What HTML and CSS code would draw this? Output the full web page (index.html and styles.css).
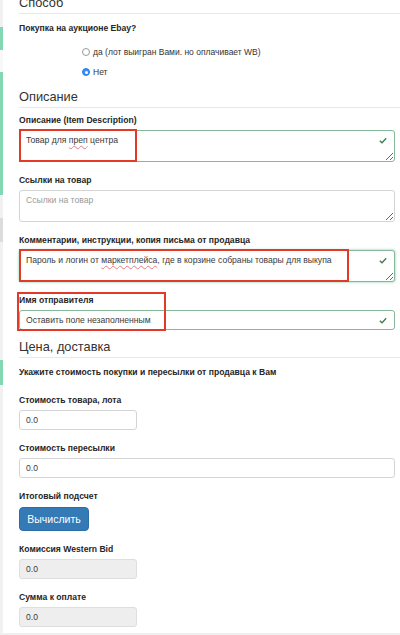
FILE: index.html
```html
<!DOCTYPE html>
<html lang="ru">
<head>
<meta charset="utf-8">
<title>Форма</title>
<link rel="stylesheet" href="styles.css">
</head>
<body>
<div class="page">
  <div class="rail">
    <div class="seg s1"></div>
    <div class="seg s2 green"></div>
    <div class="seg s3 white"></div>
    <div class="seg s4 green"></div>
    <div class="seg s5"></div>
    <div class="seg s6 gray"></div>
    <div class="seg s7"></div>
    <div class="seg s8 green"></div>
  </div>
  <main class="main">
    <h2 class="sec first">Способ</h2>
    <div class="lbl lbl-q">Покупка на аукционе Ebay?</div>
    <div class="radios">
      <div class="radio"><span class="dot"></span>да (лот выигран Вами. но оплачивает WB)</div>
      <div class="radio"><span class="dot on"></span>Нет</div>
    </div>

    <h2 class="sec sec-desc">Описание</h2>
    <div class="field field-top">
      <div class="lbl">Описание (Item Description)</div>
      <div class="ctl">
        <div class="ta ok">Товар для <span class="sp">преп</span> центра</div>
        <svg class="check" viewBox="0 0 10 8"><path d="M1 4.2 L3.8 6.8 L9 1.2" fill="none" stroke="#3c7a4e" stroke-width="1.6"/></svg>
        <div class="mark mark-1"></div>
      </div>
    </div>
    <div class="field">
      <div class="lbl">Ссылки на товар</div>
      <div class="ctl">
        <div class="ta ph">Ссылки на товар</div>
      </div>
    </div>
    <div class="field">
      <div class="lbl">Комментарии, инструкции, копия письма от продавца</div>
      <div class="ctl">
        <div class="ta ok glow">Пароль и логин от <span class="sp">маркетплейса</span>, где в корзине собраны товары для выкупа</div>
        <svg class="check" viewBox="0 0 10 8"><path d="M1 4.2 L3.8 6.8 L9 1.2" fill="none" stroke="#3c7a4e" stroke-width="1.6"/></svg>
        <div class="mark mark-3"></div>
      </div>
    </div>
    <div class="field field-name">
      <div class="lbl">Имя отправителя</div>
      <div class="ctl">
        <div class="inp ok">Оставить поле незаполненным</div>
        <svg class="check check-inp" viewBox="0 0 10 8"><path d="M1 4.2 L3.8 6.8 L9 1.2" fill="none" stroke="#3c7a4e" stroke-width="1.6"/></svg>
      </div>
      <div class="mark mark-4"></div>
    </div>

    <h2 class="sec sec-price">Цена, доставка</h2>
    <div class="lbl lbl-hint">Укажите стоимость покупки и пересылки от продавца к Вам</div>
    <div class="field field-cost">
      <div class="lbl">Стоимость товара, лота</div>
      <div class="inp short">0.0</div>
    </div>
    <div class="field">
      <div class="lbl">Стоимость пересылки</div>
      <div class="inp">0.0</div>
    </div>
    <div class="field">
      <div class="lbl lbl-btn">Итоговый подсчет</div>
      <button class="btn" type="button">Вычислить</button>
    </div>
    <div class="field">
      <div class="lbl">Комиссия Western Bid</div>
      <div class="inp short ro">0.0</div>
    </div>
    <div class="field">
      <div class="lbl">Сумма к оплате</div>
      <div class="inp short ro">0.0</div>
    </div>
  </main>
</div>
<div class="foot"></div>
</body>
</html>
```

FILE: styles.css
```css
* { box-sizing: border-box; }
html, body { margin: 0; padding: 0; background: #fff; }
body {
  font-family: "Liberation Sans", Arial, sans-serif;
  color: #2b2b2b;
  overflow: hidden;
}
.page {
  display: flex;
  height: 633px;
  overflow: hidden;
}
.rail {
  width: 3px;
  flex: 0 0 3px;
  display: flex;
  flex-direction: column;
  background: #f1f1f1;
}
.seg { flex: 0 0 auto; }
.s1 { height: 27px; }
.s2 { height: 23px; }
.s3 { height: 22px; }
.s4 { height: 123px; }
.s5 { height: 23px; }
.s6 { height: 24px; }
.s7 { height: 118px; }
.s8 { height: 25px; }
.green { background: #83d8b3; }
.white { background: #f8f8f8; }
.gray { background: #dcdcdc; }

.main {
  flex: 1;
  padding: 0 5px 0 16px;
}
.sec {
  margin: 0;
  font-weight: normal;
  font-size: 12.8px;
  line-height: 16px;
  padding-bottom: 2px;
  border-bottom: 1px solid #e8e8e8;
  color: #333;
  margin-right: -5px;
}
.sec.first { margin-top: -5px; }
.sec-desc { margin-top: 10px; }
.sec-price { margin-top: 9px; }

.lbl {
  font-weight: bold;
  font-size: 8.6px;
  line-height: 12px;
  color: #262626;
  margin-bottom: 4px;
  white-space: nowrap;
}
.lbl-q { margin-top: 8px; margin-bottom: 0; }
.lbl-hint { margin-top: 8px; margin-bottom: 0; }
.lbl-btn { margin-bottom: 5px; }

.radios {
  padding-left: 63px;
  margin-top: 11px;
  display: flex;
  flex-direction: column;
  gap: 6px;
}
.radio {
  display: flex;
  align-items: center;
  gap: 3px;
  font-size: 8.5px;
  line-height: 14px;
  color: #333;
}
.dot {
  width: 8px;
  height: 8px;
  border-radius: 50%;
  border: 1px solid #9a9a9a;
  background: #fff;
  position: relative;
}
.dot.on {
  border-color: #2f7fe8;
  background: #3a8ef5;
}
.dot.on::after {
  content: "";
  position: absolute;
  left: 1.5px;
  top: 1.5px;
  width: 3px;
  height: 3px;
  border-radius: 50%;
  background: #fff;
}

.field { margin-top: 12px; position: relative; }
.field-top { margin-top: 6px; }
.field-cost { margin-top: 16px; }
.ctl { position: relative; }

.ta {
  height: 32px;
  border: 1px solid #d4d4d4;
  border-radius: 3px;
  padding: 3px 6px;
  font-size: 8.6px;
  line-height: 12px;
  color: #3a3a3a;
  resize: vertical;
  overflow: hidden;
  background: #fff;
}
.ta.ok { border-color: #86b798; }
.ta.glow { box-shadow: 0 0 2px 1px rgba(120, 200, 160, 0.45); }
.ta.ph { color: #9a9a9a; }
.sp {
  text-decoration: underline wavy #e77c84;
  text-decoration-thickness: 1px;
  text-underline-offset: 1.5px;
}
.inp {
  height: 20px;
  border: 1px solid #d4d4d4;
  border-radius: 3px;
  padding: 0 6px;
  font-size: 8.6px;
  line-height: 18px;
  color: #3a3a3a;
  background: #fff;
}
.inp.ok { border-color: #86b798; }
.inp.short { width: 118px; }
.inp.ro { background: #eeeeee; border-color: #dedede; }

.check {
  position: absolute;
  right: 8px;
  top: 7px;
  width: 8px;
  height: 7px;
}
.check.check-inp { top: 7px; }

.mark {
  position: absolute;
  border: 2px solid #e23a27;
  pointer-events: none;
}
.mark-1 { left: 0; top: -1px; width: 118px; height: 33px; }
.mark-3 { left: 0; top: -1px; width: 330px; height: 33px; }
.mark-4 { left: -2px; top: -2px; width: 149px; height: 39px; }

.btn {
  display: block;
  width: 70px;
  height: 24px;
  border: 1px solid #2e6da4;
  border-radius: 4px;
  background: #337ab7;
  color: #fff;
  font-family: "Liberation Sans", Arial, sans-serif;
  font-size: 10.5px;
  padding: 0;
}

.foot {
  height: 2px;
  background: #efefef;
}
```
